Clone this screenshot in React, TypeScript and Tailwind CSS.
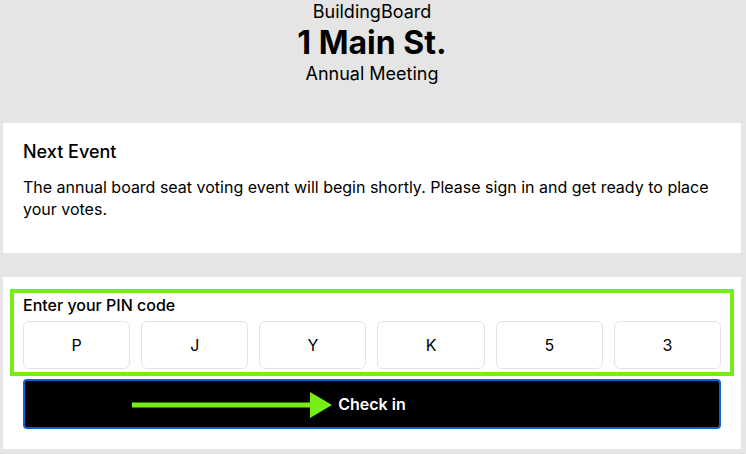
export default function App() {
  const pin = ["P", "J", "Y", "K", "5", "3"];

  return (
    <div className="min-h-screen bg-[#e5e5e5] pl-[3px] pr-[5px] text-black font-['Inter',_'Liberation_Sans',_sans-serif]">
      {/* header */}
      <header className="flex h-[123px] flex-col items-center text-center">
        <div className="text-[18px] leading-6">BuildingBoard</div>
        <h1 className="text-[32px] font-bold leading-[38px]">1 Main St.</h1>
        <div className="text-[18px] leading-6">Annual Meeting</div>
      </header>

      {/* next event */}
      <section className="h-[130px] bg-white px-5 pt-[15px]">
        <h2 className="text-[18px] font-medium leading-7">Next Event</h2>
        <p className="mt-[10px] text-[16px] leading-[22px]">
          The annual board seat voting event will begin shortly. Please sign in and get ready to place
          your votes.
        </p>
      </section>

      {/* check in */}
      <section className="mt-6 bg-white px-5 pt-[18px] pb-5">
        <div className="relative">
          <div className="pointer-events-none absolute -left-[13px] -right-[13px] -top-[6px] -bottom-[7px] border-4 border-[#74ee15]" />
          <div className="text-[16px] font-medium leading-5">Enter your PIN code</div>
          <div className="mt-[6px] grid grid-cols-6 gap-[11px]">
            {pin.map((c, i) => (
              <div
                key={i}
                className="flex h-12 items-center justify-center rounded-md border border-[#e3e3e3] bg-white text-[16px]"
              >
                {c}
              </div>
            ))}
          </div>
        </div>

        <button className="relative mt-[10px] flex h-[50px] w-full items-center justify-center rounded-[4px] border-2 border-[#0b63d6] bg-black text-[16px] font-semibold text-white">
          <svg
            className="absolute left-[107px] top-[11px]"
            width="200"
            height="26"
            viewBox="0 0 200 26"
          >
            <rect x="0" y="10.5" width="182" height="5" fill="#74ee15" />
            <polygon points="178,0 200,13 178,26" fill="#74ee15" />
          </svg>
          Check in
        </button>
      </section>
    </div>
  );
}
